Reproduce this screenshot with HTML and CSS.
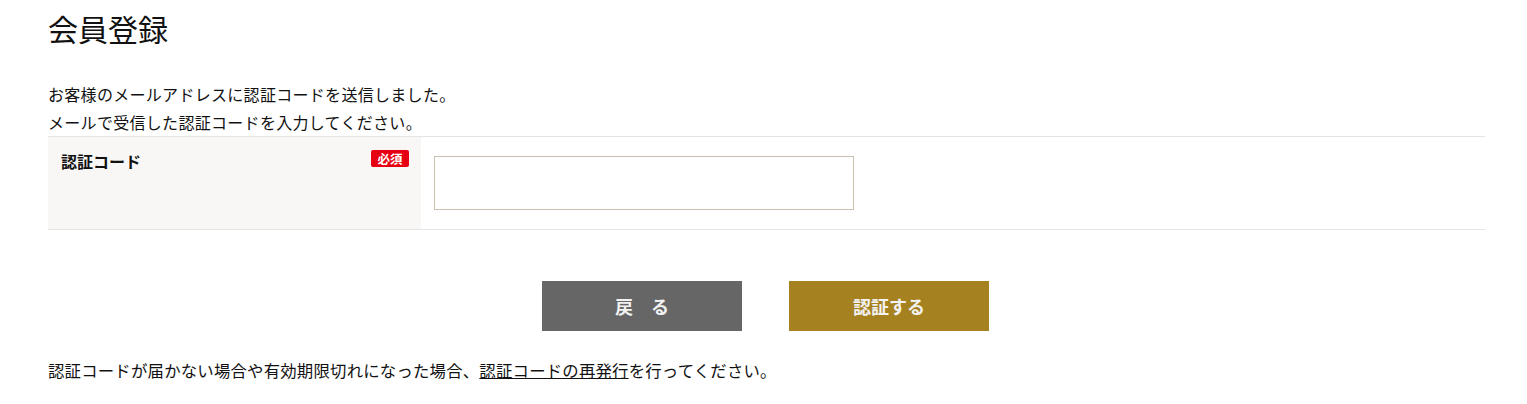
FILE: index.html
```html
<!DOCTYPE html>
<html lang="ja">
<head>
<meta charset="utf-8">
<title>会員登録</title>
<link rel="stylesheet" href="styles.css">
</head>
<body>
<main class="page">
  <h1 class="title">会員登録</h1>
  <p class="lead">お客様のメールアドレスに認証コードを送信しました。<br>メールで受信した認証コードを入力してください。</p>
  <div class="form-table">
    <div class="form-row">
      <div class="form-label">
        <span class="label-text">認証コード</span>
        <span class="badge">必須</span>
      </div>
      <div class="form-field">
        <input class="code-input" type="text" aria-label="認証コード">
      </div>
    </div>
  </div>
  <div class="actions">
    <button class="btn btn-back" type="button">戻　る</button>
    <button class="btn btn-submit" type="submit">認証する</button>
  </div>
  <p class="note">認証コードが届かない場合や有効期限切れになった場合、<a href="#" class="link">認証コードの再発行</a>を行ってください。</p>
</main>
</body>
</html>
```

FILE: styles.css
```css
html, body {
  margin: 0;
  padding: 0;
  background: #fff;
}
body {
  font-family: "Noto Sans CJK JP", "Noto Sans", sans-serif;
  color: #111;
  font-size: 16px;
}
.page {
  padding: 0 42px 0 48px;
}
.title {
  margin: 7px 0 31px;
  font-size: 30px;
  line-height: 42px;
  font-weight: 400;
}
.lead {
  margin: 0;
  font-size: 16px;
  letter-spacing: 0.3px;
  line-height: 28px;
}
.form-table {
  border-top: 1px solid #e4e4e4;
  border-bottom: 1px solid #e4e4e4;
}
.form-row {
  display: flex;
}
.form-label {
  width: 373px;
  flex: none;
  box-sizing: border-box;
  background: #f8f7f5;
  padding: 12px 12px 0 13px;
  display: flex;
  justify-content: space-between;
  align-items: flex-start;
}
.label-text {
  font-weight: 700;
  font-size: 16px;
  line-height: 24px;
}
.badge {
  margin-top: 1px;
  background: #e60012;
  color: #fff;
  font-size: 12.5px;
  font-weight: 700;
  line-height: 17px;
  width: 38px;
  text-align: center;
  border-radius: 2px;
}
.form-field {
  flex: 1;
  padding: 19px 13px;
}
.code-input {
  display: block;
  box-sizing: border-box;
  width: 420px;
  height: 54px;
  border: 1px solid #c9c1ae;
  margin: 0;
  padding: 0 10px;
  font: inherit;
  outline: none;
}
.actions {
  display: flex;
  justify-content: center;
  gap: 47px;
  margin: 51px 2px 0 0;
}
.btn {
  width: 200px;
  height: 50px;
  border: 0;
  margin: 0;
  color: #f2f2f2;
  font-family: inherit;
  font-size: 18px;
  font-weight: 700;
  cursor: pointer;
}
.btn-back {
  background: #666666;
}
.btn-submit {
  background: #a6811f;
}
.note {
  margin: 25px 0 0;
  font-size: 16.4px;
  letter-spacing: 0.2px;
  line-height: 28px;
}
.link {
  color: #111;
  text-decoration: underline;
}
```
